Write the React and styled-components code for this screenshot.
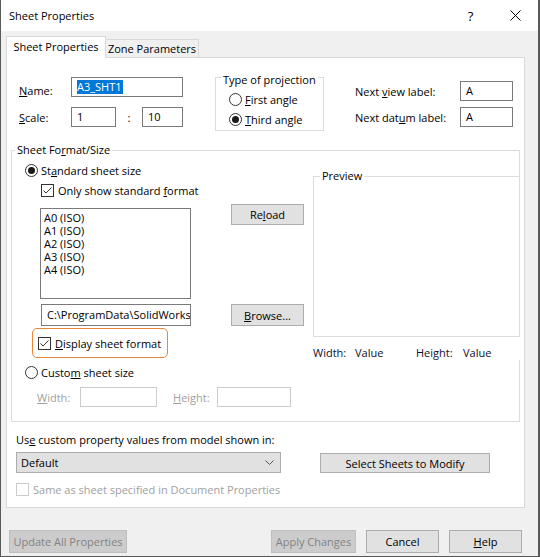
import React from 'react'
import styled, { createGlobalStyle } from 'styled-components'

const GlobalStyle = createGlobalStyle`
  html, body { margin: 0; padding: 0; background: #fff; }
  body {
    font-family: "Open Sans", "Noto Sans", sans-serif;
    font-size: 11px;
    color: #000;
  }
  * { box-sizing: border-box; }
`

const Window = styled.div`
  width: 540px;
  height: 557px;
  background: #f0f0f0;
  border: 1px solid #595959;
  border-right-width: 2px;
  border-top: none;
  display: flex;
  flex-direction: column;
`

const TitleBar = styled.div`
  height: 31px;
  background: #fff;
  display: flex;
  align-items: center;
  padding-left: 8px;
  flex: none;
`

const Title = styled.div`
  flex: 1;
  line-height: 15px;
  padding-bottom: 1px;
`

const TitleButton = styled.div`
  width: 45px;
  height: 31px;
  display: flex;
  align-items: center;
  justify-content: center;
  font-size: 13px;
`

const Body = styled.div`
  padding: 5px 0 0 5px;
`

const TabStrip = styled.div`
  display: flex;
  align-items: flex-end;
  height: 22px;
  margin-bottom: -1px;
  position: relative;
  z-index: 1;
`

const Tab = styled.div`
  width: ${p => p.$w}px;
  height: ${p => (p.$active ? 22 : 19)}px;
  background: ${p => (p.$active ? '#fff' : '#f0f0f0')};
  border: 1px solid #d9d9d9;
  border-bottom: ${p => (p.$active ? 'none' : '1px solid #d9d9d9')};
  border-left: ${p => (p.$active ? '1px solid #d9d9d9' : 'none')};
  display: flex;
  justify-content: center;
  padding-top: ${p => (p.$active ? 2 : 1)}px;
  line-height: 15px;
  white-space: nowrap;
`

const Panel = styled.div`
  width: 519px;
  height: 451px;
  background: #fff;
  border: 1px solid #d9d9d9;
`

const TopRow = styled.div`
  display: flex;
  align-items: flex-start;
  padding: 9px 0 0 12px;
`

const FieldGrid = styled.div`
  display: grid;
  grid-template-columns: ${p => p.$cols};
  grid-template-rows: 20px 20px;
  row-gap: ${p => p.$gap}px;
  margin-top: ${p => p.$top}px;
  margin-left: ${p => p.$left || 0}px;
`

const Label = styled.div`
  align-self: center;
  line-height: 15px;
  white-space: nowrap;
  margin-top: ${p => p.$drop || 0}px;
  color: ${p => (p.$disabled ? '#a0a0a0' : '#000')};
`

const Field = styled.div`
  grid-column: ${p => p.$span || 'auto'};
  width: ${p => (p.$w ? `${p.$w}px` : 'auto')};
  height: ${p => p.$h || 20}px;
  border: 1px solid ${p => (p.$disabled ? '#cccccc' : '#7a7a7a')};
  background: #fff;
  display: flex;
  align-items: center;
  padding: 0 5px;
  overflow: hidden;
  white-space: nowrap;
  line-height: 14px;
`

const Selected = styled.span`
  background: #0078d7;
  color: #fff;
  padding-right: 1px;
`

const Colon = styled.div`
  align-self: center;
  text-align: center;
  line-height: 15px;
`

const Key = styled.span`
  text-decoration: underline;
  text-underline-offset: 1px;
`

const Group = styled.fieldset`
  margin: ${p => p.$margin};
  padding: 0;
  width: ${p => (p.$w ? `${p.$w}px` : 'auto')};
  height: ${p => (p.$h ? `${p.$h}px` : 'auto')};
  border: 1px solid #dcdcdc;
  min-width: 0;
`

const Legend = styled.legend`
  margin-left: ${p => p.$offset}px;
  padding: ${p => p.$lower || 0}px 2px 0;
  line-height: 14px;
`

const Options = styled.div`
  padding-top: 2px;
`

const Option = styled.div`
  display: flex;
  align-items: center;
  gap: ${p => p.$gap || 3}px;
  height: 20px;
  padding-left: ${p => p.$indent || 0}px;
  margin-top: ${p => p.$top || 0}px;
  color: ${p => (p.$disabled ? '#a0a0a0' : '#000')};
  white-space: nowrap;
  line-height: 15px;
`

const RadioCircle = styled.span`
  width: 13px;
  height: 13px;
  flex: none;
  border-radius: 50%;
  border: 1px solid #333;
  background: #fff;
  display: inline-flex;
  align-items: center;
  justify-content: center;
  &::after {
    content: '';
    width: 7px;
    height: 7px;
    border-radius: 50%;
    background: ${p => (p.$on ? '#1a1a1a' : 'transparent')};
  }
`

const CheckBox = styled.span`
  width: 13px;
  height: 13px;
  flex: none;
  border: 1px solid ${p => (p.$disabled ? '#cccccc' : '#333')};
  background: #fff;
  display: inline-flex;
  align-items: center;
  justify-content: center;
`

const FormatBody = styled.div`
  display: flex;
`

const LeftCol = styled.div`
  width: 301px;
  flex: none;
  display: flex;
  flex-direction: column;
  align-items: flex-start;
  padding-bottom: 14px;
`

const RightCol = styled.div`
  flex: 1;
  margin-right: -1px;
  display: flex;
  flex-direction: column;
`

const Row = styled.div`
  display: flex;
  align-items: flex-start;
  margin-top: ${p => p.$top || 0}px;
  padding-left: ${p => p.$indent || 0}px;
`

const ListBox = styled.div`
  width: 151px;
  height: 91px;
  margin-top: 4px;
  border: 1px solid #7a7a7a;
  padding: 2px 3px;
`

const ListItem = styled.div`
  line-height: 13px;
  white-space: nowrap;
`

const Button = styled.button`
  font-family: inherit;
  font-size: 11px;
  width: ${p => p.$w}px;
  height: ${p => p.$h || 21}px;
  margin-left: ${p => p.$left || 0}px;
  margin-top: ${p => p.$top || 0}px;
  padding: 0;
  background: ${p => (p.disabled ? '#cccccc' : '#e1e1e1')};
  border: 1px solid ${p => (p.disabled ? '#bfbfbf' : '#adadad')};
  color: ${p => (p.disabled ? '#838383' : '#000')};
  line-height: 15px;
  flex: none;
`

const Highlight = styled.div`
  width: 136px;
  height: 30px;
  margin: 2px 0 0 20px;
  border: 1px solid #e8873a;
  border-radius: 5px;
  display: flex;
  align-items: center;
  padding-left: 5px;
`

const SizeRow = styled.div`
  display: flex;
  align-items: center;
  margin-top: 5px;
  padding-left: 25px;
`

const Dims = styled.div`
  height: 23px;
  padding-top: 9px;
  background: #fff;
  display: flex;
  line-height: 14px;
  white-space: nowrap;
  color: #10102a;
`

const DimCell = styled.span`
  width: ${p => p.$w}px;
  flex: none;
`

const Caption = styled.div`
  margin-top: ${p => p.$top}px;
  padding-left: 9px;
  line-height: 14px;
`

const Combo = styled.div`
  width: 265px;
  height: 21px;
  background: #e1e1e1;
  border: 1px solid #adadad;
  display: flex;
  align-items: center;
  justify-content: space-between;
  padding: 0 6px 0 4px;
  line-height: 15px;
`

const Footer = styled.div`
  display: flex;
  padding: 22px 16px 0 8px;
  gap: 10px;
`

const Spacer = styled.div`
  flex: 1;
`

const Check = () => (
  <svg width="11" height="11" viewBox="0 0 11 11">
    <polyline points="1.5,5.5 4,8 9.5,2.5" fill="none" stroke="#333" strokeWidth="1" />
  </svg>
)

const formats = ['A0 (ISO)', 'A1 (ISO)', 'A2 (ISO)', 'A3 (ISO)', 'A4 (ISO)']

export default function App() {
  return (
    <Window>
      <GlobalStyle />
      <TitleBar>
        <Title>Sheet Properties</Title>
        <TitleButton>?</TitleButton>
        <TitleButton>
          <svg width="11" height="11" viewBox="0 0 11 11">
            <path d="M0.5 0.5 L10.5 10.5 M10.5 0.5 L0.5 10.5" stroke="#000" strokeWidth="1" />
          </svg>
        </TitleButton>
      </TitleBar>

      <Body>
        <TabStrip>
          <Tab $active $w={100}>Sheet Properties</Tab>
          <Tab $w={93}>Zone Parameters</Tab>
        </TabStrip>

        <Panel>
          <TopRow>
            <FieldGrid $cols="52px 45px 26px 41px" $gap={10} $top={10}>
              <Label $drop={6}><Key>N</Key>ame:</Label>
              <Field $span="2 / 5"><Selected>A3_SHT1</Selected></Field>
              <Label><Key>S</Key>cale:</Label>
              <Field>1</Field>
              <Colon>:</Colon>
              <Field>10</Field>
            </FieldGrid>

            <Group $margin="0 0 0 32px" $w={109} $h={64}>
              <Legend $offset={5} $lower={6}>Type of projection</Legend>
              <Options>
                <Option $indent={13}>
                  <RadioCircle />
                  <span><Key>F</Key>irst angle</span>
                </Option>
                <Option $indent={13}>
                  <RadioCircle $on />
                  <span><Key>T</Key>hird angle</span>
                </Option>
              </Options>
            </Group>

            <FieldGrid $cols="105px 53px" $gap={6} $top={14} $left={31}>
              <Label>Next <Key>v</Key>iew label:</Label>
              <Field>A</Field>
              <Label>Next dat<Key>u</Key>m label:</Label>
              <Field>A</Field>
            </FieldGrid>
          </TopRow>

          <Group $margin="12px 0 0 4px" $w={509}>
            <Legend $offset={3}>Sheet Fo<Key>r</Key>mat/Size</Legend>
            <FormatBody>
              <LeftCol>
                <Option $indent={13} $top={3}>
                  <RadioCircle $on />
                  <span>St<Key>a</Key>ndard sheet size</span>
                </Option>
                <Option $indent={29} $gap={4}>
                  <CheckBox><Check /></CheckBox>
                  <span>Only show standard <Key>f</Key>ormat</span>
                </Option>
                <Row $top={4} $indent={28}>
                  <ListBox>
                    {formats.map(f => <ListItem key={f}>{f}</ListItem>)}
                  </ListBox>
                  <Button $w={73} $left={40}>Re<Key>l</Key>oad</Button>
                </Row>
                <Row $top={5} $indent={29}>
                  <Field $w={150} $h={22}>C:\ProgramData\SolidWorks</Field>
                  <Button $w={73} $h={22} $left={40}><Key>B</Key>rowse...</Button>
                </Row>
                <Highlight>
                  <Option $gap={4}>
                    <CheckBox><Check /></CheckBox>
                    <span><Key>D</Key>isplay sheet format</span>
                  </Option>
                </Highlight>
                <Option $indent={13} $top={4}>
                  <RadioCircle />
                  <span>Custo<Key>m</Key> sheet size</span>
                </Option>
                <SizeRow>
                  <DimCell $w={43}><Label $disabled><Key>W</Key>idth:</Label></DimCell>
                  <Field $w={77} $disabled />
                  <DimCell $w={16} />
                  <DimCell $w={44}><Label $disabled><Key>H</Key>eight:</Label></DimCell>
                  <Field $w={74} $disabled />
                </SizeRow>
              </LeftCol>

              <RightCol>
                <Group $margin="12px 0 0 0" $h={168}>
                  <Legend $offset={6}>Preview</Legend>
                </Group>
                <Dims>
                  <DimCell $w={42}>Width:</DimCell>
                  <DimCell $w={61}>Value</DimCell>
                  <DimCell $w={47}>Height:</DimCell>
                  <DimCell $w={50}>Value</DimCell>
                </Dims>
              </RightCol>
            </FormatBody>
          </Group>

          <Caption $top={11}>Us<Key>e</Key> custom property values from model shown in:</Caption>
          <Row $top={5} $indent={9}>
            <Combo>
              <span>Default</span>
              <svg width="9" height="5" viewBox="0 0 9 5">
                <polyline points="0.5,0.5 4.5,4.5 8.5,0.5" fill="none" stroke="#555" strokeWidth="1" />
              </svg>
            </Combo>
            <Button $w={170} $h={20} $left={39} $top={1}>Select Sheets to Modify</Button>
          </Row>
          <Option $indent={9} $gap={4} $top={6} $disabled>
            <CheckBox $disabled />
            <span>Same as sheet specified in Document Properties</span>
          </Option>
        </Panel>
      </Body>

      <Footer>
        <Button $w={118} $h={23} disabled>Update All Properties</Button>
        <Spacer />
        <Button $w={85} $h={23} disabled>Apply Changes</Button>
        <Button $w={73} $h={23}>Cancel</Button>
        <Button $w={73} $h={23}><Key>H</Key>elp</Button>
      </Footer>
    </Window>
  )
}
